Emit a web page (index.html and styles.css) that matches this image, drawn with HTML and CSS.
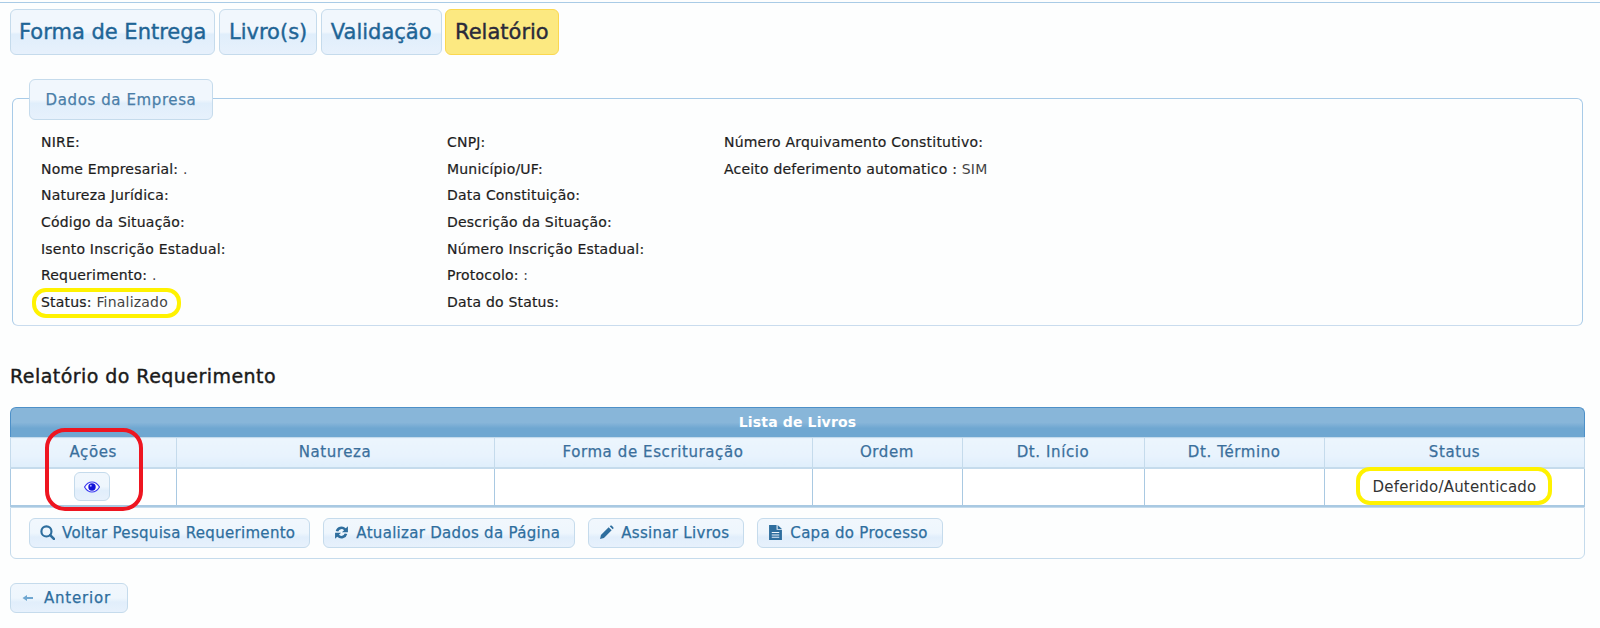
FILE: index.html
```html
<!DOCTYPE html>
<html lang="pt-BR">
<head>
<meta charset="utf-8">
<title>Relatório</title>
<link rel="stylesheet" href="styles.css">
</head>
<body>
<div class="page">
  <nav class="tabs">
    <a class="tab">Forma de Entrega</a>
    <a class="tab">Livro(s)</a>
    <a class="tab">Validação</a>
    <a class="tab tab-active">Relatório</a>
  </nav>

  <section class="company">
    <h2 class="legend">Dados da Empresa</h2>
    <div class="fields">
      <div class="col col-1">
        <p>NIRE:</p>
        <p>Nome Empresarial: <span class="val">.</span></p>
        <p>Natureza Jurídica:</p>
        <p>Código da Situação:</p>
        <p>Isento Inscrição Estadual:</p>
        <p>Requerimento: <span class="val">.</span></p>
        <p>Status: <span class="val">Finalizado</span></p>
      </div>
      <div class="col col-2">
        <p>CNPJ:</p>
        <p>Município/UF:</p>
        <p>Data Constituição:</p>
        <p>Descrição da Situação:</p>
        <p>Número Inscrição Estadual:</p>
        <p>Protocolo: <span class="val">:</span></p>
        <p>Data do Status:</p>
      </div>
      <div class="col">
        <p>Número Arquivamento Constitutivo:</p>
        <p>Aceito deferimento automatico : <span class="val">SIM</span></p>
      </div>
    </div>
  </section>

  <h1 class="title">Relatório do Requerimento</h1>

  <section class="grid">
    <div class="caption">Lista de Livros</div>
    <table class="list">
      <colgroup>
        <col class="c1"><col class="c2"><col class="c3"><col class="c4"><col class="c5"><col class="c6"><col class="c7">
      </colgroup>
      <thead>
        <tr>
          <th>Ações</th><th>Natureza</th><th>Forma de Escrituração</th><th>Ordem</th><th>Dt. Início</th><th>Dt. Término</th><th>Status</th>
        </tr>
      </thead>
      <tbody>
        <tr>
          <td><button class="btn btn-eye" type="button" aria-label="Ver">
            <svg class="eye" viewBox="0 0 16 12" width="16" height="12"><path d="M0.500 6C2.500 2.600 5 1 8 1s5.500 1.600 7.500 5c-2 3.400-4.500 5-7.500 5S2.500 9.400 0.500 6z" fill="#fff" stroke="#3a3af0" stroke-width="1.200"/><circle cx="8" cy="6" r="3.700" fill="#1313d8"/><circle cx="6.800" cy="4.800" r="1" fill="#a9a9ff"/></svg>
          </button></td>
          <td></td><td></td><td></td><td></td><td></td>
          <td class="status">Deferido/Autenticado</td>
        </tr>
      </tbody>
    </table>
    <div class="actions">
      <button class="btn" type="button">
        <svg class="ic" viewBox="0 0 14 14" width="15" height="15"><circle cx="6" cy="6" r="4.700" fill="none" stroke="currentColor" stroke-width="2"/><path d="M9.500 9.500L13 13" stroke="currentColor" stroke-width="2.400" stroke-linecap="round"/></svg>
        Voltar Pesquisa Requerimento
      </button>
      <button class="btn" type="button">
        <svg class="ic" viewBox="0 0 14 14" width="15" height="15"><path d="M1.600 5.600A5.600 5.600 0 0 1 11 3L13 1.200V6.800H7.400L9.400 4.800A3.300 3.300 0 0 0 4 6z" fill="currentColor"/><path d="M12.400 8.400A5.600 5.600 0 0 1 3 11L1 12.800V7.200H6.600L4.600 9.200A3.300 3.300 0 0 0 10 8z" fill="currentColor"/></svg>
        Atualizar Dados da Página
      </button>
      <button class="btn" type="button">
        <svg class="ic" viewBox="0 0 14 14" width="15" height="15"><path d="M1 13l.8-3.600L9 2.200l2.800 2.800-7.200 7.200zM10 1.200l.6-.5c.5-.4 1-.4 1.400 0l1.300 1.300c.4.400.4.900 0 1.400l-.5.600z" fill="currentColor"/></svg>
        Assinar Livros
      </button>
      <button class="btn" type="button">
        <svg class="ic" viewBox="0 0 14 14" width="15" height="15"><path fill-rule="evenodd" d="M1 0h7v4.500h5V14H1zM3.500 6.500v1h7v-1zM3.500 8.800v1h7v-1zM3.500 11v1h7v-1z" fill="currentColor"/><path d="M9 0l4 3.700H9z" fill="currentColor"/></svg>
        Capa do Processo
      </button>
    </div>
  </section>

  <div class="nav-row">
    <button class="btn btn-back" type="button">
      <svg class="ic ic-arrow" viewBox="0 0 12 8" width="12" height="8"><path d="M0.500 4L5 1v2h6v2H5v2z" fill="currentColor"/></svg>
      Anterior
    </button>
  </div>
</div>

<span class="mark mark-red"></span>
<span class="mark mark-yellow-a"></span>
<span class="mark mark-yellow-b"></span>
</body>
</html>
```

FILE: styles.css
```css
* { box-sizing: border-box; }

html, body { height: 100%; }

body {
  margin: 0;
  background: #fdfefe;
  color: #222;
  font-family: "DejaVu Sans", sans-serif;
  font-size: 14px;
  overflow: hidden;
  position: relative;
}

.page {
  border-top: 1px solid #a9cbe6;
  margin-top: 2px;
  padding: 6px 15px 0 10px;
}

.tabs { display: flex; gap: 3.500px; }

.tab {
  height: 46px;
  padding: 0 9px;
  display: flex;
  align-items: center;
  font-size: 21px;
  font-weight: 500;
  color: #1f6596;
  border: 1px solid #c5dbec;
  border-radius: 6px;
  background: linear-gradient(#f1f7fd 0%, #f1f7fd 50%, #e0eefb 55%, #e7f1fc 100%);
  -webkit-text-stroke: 0.4px currentColor;
}

.tab:first-child { padding: 0 8px; }

.tab-active {
  color: #2a2a3a;
  background: #fce981;
  border-color: #fbd850;
}

.company {
  margin: 43px 2px 0;
  height: 228px;
  border: 1px solid #a8cbe8;
  border-bottom-color: #c9dcee;
  border-radius: 6px;
  padding: 30px 28px 0;
  position: relative;
}

.legend {
  position: absolute;
  left: 16px;
  top: -20px;
  width: 184px;
  height: 41px;
  margin: 0;
  display: flex;
  align-items: center;
  justify-content: center;
  font-size: 15px;
  font-weight: 500;
  letter-spacing: .6px;
  color: #4a7ea8;
  border: 1px solid #c5dbec;
  border-radius: 6px;
  background: linear-gradient(#f1f7fd 0%, #f1f7fd 50%, #e0eefb 60%, #e7f1fc 100%);
  -webkit-text-stroke: 0.25px currentColor;
}

.fields { display: flex; }

.col p {
  margin: 0;
  height: 26.670px;
  line-height: 26.670px;
  letter-spacing: .2px;
  white-space: nowrap;
  color: #1d1d1d;
  -webkit-text-stroke: 0.2px currentColor;
}

.col-1 { width: 406px; }
.col-2 { width: 277px; }

.val { color: #444; -webkit-text-stroke: 0; }

.title {
  margin: 33px 0 0;
  height: 34px;
  font-size: 19px;
  font-weight: 500;
  line-height: 34px;
  letter-spacing: .45px;
  color: #1a1a1a;
  -webkit-text-stroke: 0.4px currentColor;
}

.grid { margin-top: 14px; }

.caption {
  height: 30px;
  line-height: 28px;
  text-align: center;
  font-weight: 700;
  font-size: 14px;
  letter-spacing: .15px;
  color: #fff;
  border-radius: 6px 6px 0 0;
  border: 1px solid #4d90c8;
  border-bottom: 0;
  background: linear-gradient(#88b6d9 0%, #88b6d9 50%, #6fa7d1 70%, #6fa7d1 100%);
}

.list {
  width: 100%;
  table-layout: fixed;
  border-collapse: collapse;
}

.c1 { width: 165.500px; }
.c2 { width: 318px; }
.c3 { width: 318px; }
.c4 { width: 150px; }
.c5 { width: 182px; }
.c6 { width: 180.500px; }

.list th {
  height: 30px;
  padding: 0;
  font-size: 15px;
  font-weight: 500;
  letter-spacing: .6px;
  color: #3a6f9c;
  border: 1px solid #c5dbec;
  border-bottom: 2px solid #c5dbec;
  background: linear-gradient(#ecf5fd 0%, #e8f3fd 60%, #dfeefb 100%);
  -webkit-text-stroke: 0.25px currentColor;
}

.list td {
  height: 38px;
  padding: 0;
  text-align: center;
  color: #333;
  background: #fff;
  border: 1px solid #a9c9e2;
  border-bottom: 2px solid #a9c9e2;
}

.list .status { font-size: 15px; letter-spacing: .2px; }

.actions {
  height: 52px;
  margin-top: 0;
  padding: 10px 18px;
  display: flex;
  gap: 13px;
  border: 1px solid #c5dbec;
  border-radius: 0 0 6px 6px;
}

.btn {
  height: 30px;
  padding: 0 14px 0 10px;
  display: inline-flex;
  align-items: center;
  gap: 7px;
  font-family: inherit;
  font-size: 15px;
  font-weight: 500;
  letter-spacing: .3px;
  color: #2e6e9e;
  border: 1px solid #c5dbec;
  border-radius: 6px;
  background: linear-gradient(#f1f7fd 0%, #eef6fd 50%, #e1eefb 65%, #e7f1fc 100%);
  -webkit-text-stroke: 0.25px currentColor;
}

.btn-eye {
  width: 36px;
  height: 29px;
  margin-right: 2px;
  padding: 0;
  justify-content: center;
  vertical-align: middle;
}

.btn-back { padding: 0 16px 0 11px; gap: 10px; letter-spacing: .8px; }

.ic { flex: none; color: #2e6e9e; -webkit-text-stroke: 0; }
.ic-arrow { color: #6fa7d1; }
.eye { display: block; }

.nav-row { margin-top: 24px; }

.mark {
  position: absolute;
  pointer-events: none;
  background: transparent;
}

.mark-red {
  left: 45px;
  top: 428px;
  width: 98px;
  height: 83px;
  border: 4px solid #ee1520;
  border-radius: 20px;
}

.mark-yellow-a {
  left: 32px;
  top: 288px;
  width: 149px;
  height: 30px;
  border: 4px solid #fff200;
  border-radius: 14px;
}

.mark-yellow-b {
  left: 1356px;
  top: 467px;
  width: 196px;
  height: 38px;
  border: 4px solid #fff200;
  border-radius: 14px;
}
```
